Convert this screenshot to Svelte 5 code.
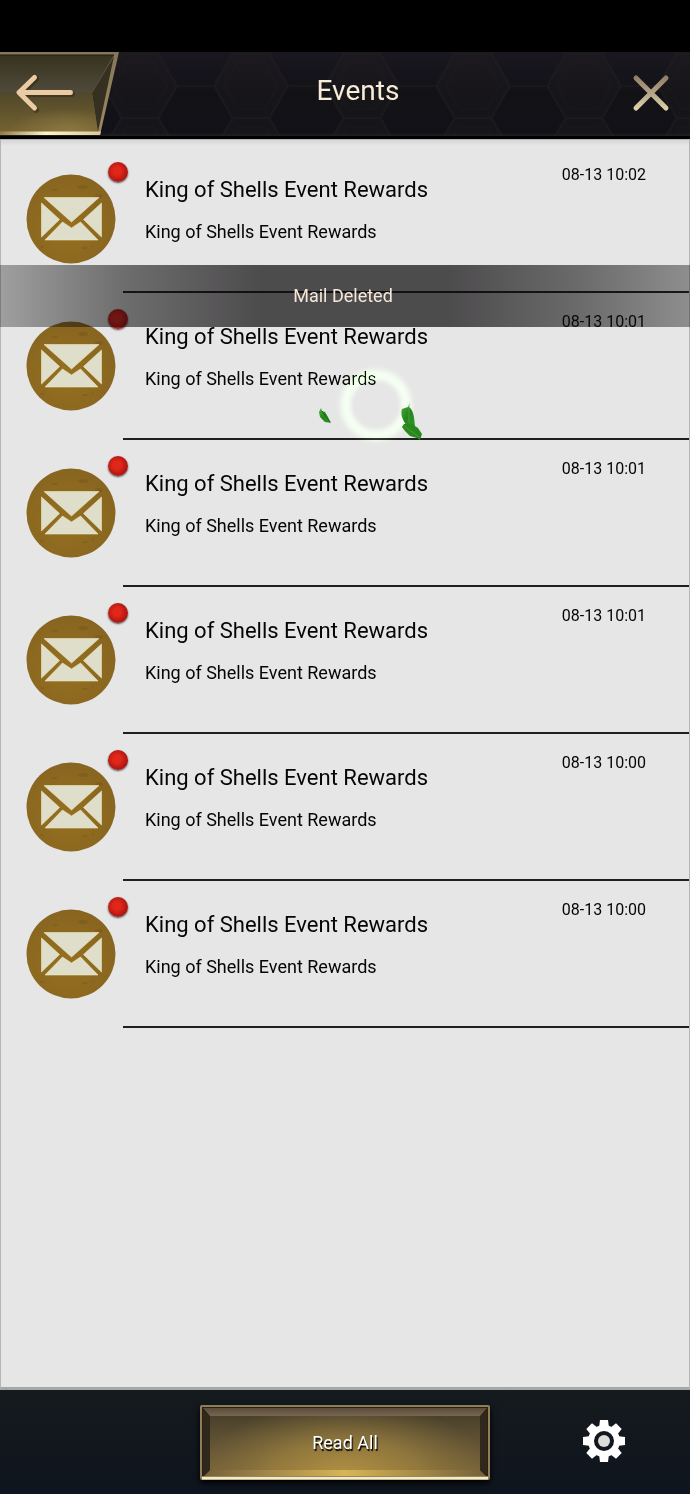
<script>
  const mails = [
    { id: 1, time: "08-13 10:02" },
    { id: 2, time: "08-13 10:01" },
    { id: 3, time: "08-13 10:01" },
    { id: 4, time: "08-13 10:01" },
    { id: 5, time: "08-13 10:00" },
    { id: 6, time: "08-13 10:00" },
  ].map((mail) => ({
    ...mail,
    title: "King of Shells Event Rewards",
    text: "King of Shells Event Rewards",
  }));

  const teeth = [0, 45, 90, 135, 180, 225, 270, 315];
</script>

<div class="screen">
  <header>
    <svg class="hexes" aria-hidden="true">
      <defs>
        <pattern id="hex" x="214" y="2" width="111" height="64" patternUnits="userSpaceOnUse">
          <path d="M0 32 18.5 0H55.5L74 32 55.5 64H18.5Z" fill="#22201f" fill-opacity=".25" />
          <path d="M0 32 18.5 0H55.5L74 32 55.5 64H18.5ZM74 32H111" fill="none" stroke="#242124" stroke-opacity=".4" stroke-width="2" />
          <path d="M10 32 23 9H51L64 32 51 55H23Z" fill="none" stroke="#242126" stroke-opacity=".25" />
        </pattern>
      </defs>
      <rect width="100%" height="100%" fill="url(#hex)" />
    </svg>

    <button class="back" aria-label="Back">
      <svg viewBox="0 0 120 84" aria-hidden="true">
        <defs>
          <linearGradient id="backTop" x2="0" y2="1">
            <stop offset="0" stop-color="#37331f" />
            <stop offset="1" stop-color="#504a3b" />
          </linearGradient>
          <linearGradient id="backLow" x2="0" y2="1">
            <stop offset="0" stop-color="#51482a" />
            <stop offset="1" stop-color="#736231" />
          </linearGradient>
          <radialGradient id="backGlow" cx=".68" cy="1" r=".6">
            <stop offset="0" stop-color="#8d7843" />
            <stop offset="1" stop-color="#8d7843" stop-opacity="0" />
          </radialGradient>
          <linearGradient id="backEdge" x2="0" y2="1">
            <stop offset="0" stop-color="#85765a" />
            <stop offset="1" stop-color="#9c8b5f" />
          </linearGradient>
          <linearGradient id="backBase">
            <stop offset="0" stop-color="#8f7b45" />
            <stop offset=".45" stop-color="#fff3c5" />
            <stop offset="1" stop-color="#d8c999" />
          </linearGradient>
        </defs>
        <path d="M0 0H119L100 83H0Z" fill="url(#backEdge)" />
        <path d="M0 3H114L92 41H0Z" fill="url(#backTop)" />
        <path d="M0 41H92L98 80H0Z" fill="url(#backLow)" />
        <path d="M0 41H92L98 80H0Z" fill="url(#backGlow)" />
        <path d="M114 4 92 41 98 80Z" fill="#353020" />
        <path d="M0 79.500H101L100 83H0Z" fill="url(#backBase)" />
        <path d="M0 3H114" stroke="#211e13" />
        <path d="M36 27 21 42 36 58M21 42H72" fill="none" stroke="#241e10" stroke-opacity=".4" stroke-width="6" stroke-linecap="round" />
        <path d="M34.500 25.500 19 40.500 34.500 56M19 40.500 70.500 40.400" fill="none" stroke="#eacba3" stroke-width="5" stroke-linecap="round" stroke-linejoin="round" />
      </svg>
    </button>

    <h1>Events</h1>

    <button class="close" aria-label="Close">
      <svg viewBox="0 0 40 40" aria-hidden="true">
        <defs>
          <linearGradient id="cross" x2="0" y2="40" gradientUnits="userSpaceOnUse">
            <stop offset="0" stop-color="#85765f" />
            <stop offset=".55" stop-color="#b8a98c" />
            <stop offset="1" stop-color="#e5dcb2" />
          </linearGradient>
        </defs>
        <path d="M5 5 35 35M35 5 5 35" fill="none" stroke="url(#cross)" stroke-width="5" stroke-linecap="round" />
      </svg>
    </button>
  </header>

  <main>
    <ul>
      {#each mails as mail (mail.id)}
        <li>
          <button class="mail">
            <span class="avatar">
              <svg viewBox="0 0 90 90" aria-hidden="true">
                <defs>
                  <radialGradient id="coin{mail.id}" cx=".45" cy=".6" r=".6">
                    <stop offset="0" stop-color="#957021" />
                    <stop offset="1" stop-color="#886520" />
                  </radialGradient>
                </defs>
                <circle cx="45" cy="45" r="44.500" fill="url(#coin{mail.id})" />
                <g fill="#70501a" opacity=".35">
                  <ellipse cx="57" cy="13" rx="5" ry="2" />
                  <ellipse cx="73" cy="22" rx="4" ry="2" />
                  <ellipse cx="29" cy="16" rx="3" ry="1" />
                  <ellipse cx="16" cy="73" rx="2" ry="1" />
                  <ellipse cx="59" cy="74" rx="3" ry="1" />
                  <circle cx="67" cy="72" r="1" />
                </g>
                <g fill="#dedecb" stroke="#efe9ba" stroke-width=".6">
                  <path d="M18 23.500H73L45.500 48Z" />
                  <path d="M15.500 29 33.500 45.500 15.500 63Z" />
                  <path d="M75.500 29 57.500 45.500 75.500 63Z" />
                  <path d="M36.500 48 45.500 54 54.500 48 72 66H19Z" />
                </g>
              </svg>
              <span class="dot"></span>
            </span>
            <span class="body">
              <span class="copy">
                <span class="title">{mail.title}</span>
                <span class="text">{mail.text}</span>
              </span>
              <time>{mail.time}</time>
            </span>
          </button>
        </li>
      {/each}
    </ul>

    <div class="toast" role="status">Mail Deleted</div>

    <div class="ring"></div>
    <svg class="leaves" viewBox="310 360 130 90" aria-hidden="true">
      <defs>
        <linearGradient id="leaf" x2="1" y2="1">
          <stop offset="0" stop-color="#48ad39" />
          <stop offset=".5" stop-color="#25841e" />
          <stop offset="1" stop-color="#2f9a25" />
        </linearGradient>
      </defs>
      <path d="M321 408 322 411 325 412 328 417 331 423 325 422 320 417 319 412Z" fill="url(#leaf)" />
      <path d="M322 411 330 422" fill="none" stroke="#1a6819" stroke-width="1" />
      <path d="M410 403 409 407C414 411 414 417 415 426L408 427C403 421 400 415 402 409L408 407Z" fill="url(#leaf)" />
      <path d="M402 427 404 424 412 424 418 428 422 434 420 440 417 438 410 436 405 431Z" fill="#28881f" />
      <path d="M409 407 409 423M404 426 419 437" fill="none" stroke="#57ad45" stroke-opacity=".6" stroke-width="1" />
    </svg>
  </main>

  <footer>
    <button class="read">
      <svg viewBox="0 0 290 75" preserveAspectRatio="none" aria-hidden="true">
        <defs>
          <linearGradient id="plate" x2="0" y2="1">
            <stop offset="0" stop-color="#4a412b" />
            <stop offset=".5" stop-color="#625334" />
            <stop offset="1" stop-color="#776338" />
          </linearGradient>
          <radialGradient
            id="shine"
            cx="145"
            cy="0"
            r="150"
            gradientUnits="userSpaceOnUse"
            gradientTransform="translate(0 72) scale(1 .5)"
          >
            <stop offset="0" stop-color="#b39343" />
            <stop offset=".5" stop-color="#9c803f" stop-opacity=".75" />
            <stop offset="1" stop-color="#84703c" stop-opacity="0" />
          </radialGradient>
          <linearGradient id="lip">
            <stop offset="0" stop-color="#75613a" />
            <stop offset=".5" stop-color="#d9b556" />
            <stop offset="1" stop-color="#75613a" />
          </linearGradient>
          <linearGradient id="ridge" x2="0" y2="1">
            <stop offset="0" stop-color="#5b4b38" />
            <stop offset="1" stop-color="#756553" />
          </linearGradient>
        </defs>
        <rect width="290" height="75" rx="2" fill="#917c5b" />
        <rect x="2" y="2" width="286" height="70" fill="#292114" />
        <rect x="10" y="11" width="270" height="55" fill="url(#plate)" />
        <rect x="10" y="11" width="270" height="55" fill="url(#shine)" />
        <path d="M3 3H287L280 11H10Z" fill="url(#ridge)" />
        <path d="M10 65H280L286 71H4Z" fill="url(#lip)" />
        <path d="M3 5 10 12V65L3 71ZM287 5 280 12V65L287 71Z" fill="#30291b" />
        <path d="M2 73H288" stroke="#f8edc2" stroke-width="3" />
      </svg>
      <span>Read All</span>
    </button>
    <button class="settings" aria-label="Settings">
      <svg viewBox="-21 -21 42 42" aria-hidden="true">
        <g fill="#fff">
          {#each teeth as angle}
            <path d="M-5-13-4-21H4L5-13Z" transform="rotate({angle})" />
          {/each}
        </g>
        <circle r="13" fill="none" stroke="#fff" stroke-width="6" />
        <circle r="6" fill="#dcdcdc" />
      </svg>
    </button>
  </footer>
</div>

<style>
  :global(body) {
    margin: 0;
    background: #000;
  }
  .screen {
    box-sizing: border-box;
    min-height: 100vh;
    padding-top: 52px;
    display: flex;
    flex-direction: column;
    background: #000;
    color: #050505;
    font-family: Roboto, "Liberation Sans", sans-serif;
  }
  button {
    margin: 0;
    padding: 0;
    border: 0;
    background: none;
    color: inherit;
    font: inherit;
    cursor: pointer;
  }
  svg {
    display: block;
  }
  header {
    position: relative;
    display: grid;
    grid-template-columns: 120px 1fr 94px;
    height: 84px;
    border-bottom: 3px solid #000;
    background: linear-gradient(#1a1720, #121216 50%, #121118 96%, #201e20);
  }
  .hexes {
    position: absolute;
    inset: 0;
    width: 100%;
    height: 100%;
  }
  .back,
  .close,
  h1 {
    position: relative;
  }
  .back svg {
    width: 120px;
    height: 84px;
  }
  h1 {
    margin: 0;
    color: #f8ebd8;
    font-size: 28px;
    font-weight: 400;
    line-height: 78px;
    text-align: center;
  }
  .close {
    justify-self: end;
    padding: 0 19px 2px;
  }
  .close svg {
    width: 40px;
    height: 40px;
  }
  main {
    position: relative;
    flex: 1;
    box-sizing: border-box;
    padding-top: 6px;
    border: 1px solid #b5b5b5;
    border-bottom: 3px solid #a5a7a7;
    background: linear-gradient(#d6d6d6, #e6e6e6 6px);
  }
  ul {
    margin: 0;
    padding: 0;
    list-style: none;
  }
  .mail {
    display: flex;
    width: 100%;
    height: 147px;
    text-align: left;
  }
  .avatar {
    position: relative;
    flex: none;
    width: 122px;
    padding-top: 28px;
  }
  .avatar svg {
    width: 90px;
    height: 90px;
    margin-left: 25px;
  }
  .dot {
    position: absolute;
    top: 16px;
    right: -5px;
    width: 20px;
    height: 20px;
    border-radius: 50%;
    background: radial-gradient(circle at 45% 45%, #e0271a 25%, #a31310 75%);
    box-shadow: 0 1px 2px rgba(0, 0, 0, 0.7);
  }
  .body {
    box-sizing: border-box;
    display: flex;
    flex: 1;
    align-self: stretch;
    align-items: flex-start;
    justify-content: space-between;
    padding: 19px 43px 0 22px;
    border-bottom: 2px solid #202020;
  }
  .copy {
    display: grid;
    gap: 16px;
    padding-top: 12px;
  }
  .title {
    font-size: 22px;
    line-height: 26px;
  }
  .text {
    font-size: 18px;
    line-height: 26px;
  }
  time {
    font-size: 16px;
    line-height: 20px;
  }
  .toast {
    position: absolute;
    top: 125px;
    left: -1px;
    right: -1px;
    height: 62px;
    padding-right: 4px;
    box-sizing: border-box;
    background: linear-gradient(
      90deg,
      rgba(12, 10, 12, 0.32),
      rgba(12, 10, 12, 0.55) 18%,
      rgba(12, 10, 12, 0.7) 38%,
      rgba(12, 10, 12, 0.7) 65%,
      rgba(12, 10, 12, 0.56) 84%,
      rgba(12, 10, 12, 0.4)
    );
    color: #f7e7d6;
    font-size: 18px;
    line-height: 62px;
    text-align: center;
  }
  .ring {
    position: absolute;
    top: 230px;
    left: calc(50% - 4px);
    box-sizing: border-box;
    width: 70px;
    height: 70px;
    border: 10px solid #d0ffbe;
    border-radius: 50%;
    filter: blur(2px);
    mix-blend-mode: overlay;
    box-shadow: 0 0 5px #b4ffa0;
    pointer-events: none;
  }
  .leaves {
    position: absolute;
    top: 220px;
    left: calc(50% - 35px);
    width: 130px;
    height: 90px;
    pointer-events: none;
  }
  footer {
    display: grid;
    grid-template-columns: 1fr 290px 1fr;
    align-items: center;
    padding: 15px 0 14px;
    background: linear-gradient(#151a1e, #0f151e);
  }
  .read {
    position: relative;
    grid-column: 2;
    height: 75px;
    box-shadow: 0 3px 6px #000;
    color: #fff;
    font-size: 18px;
    text-shadow: 1px 2px 1px #000;
  }
  .read svg {
    position: absolute;
    inset: 0;
    width: 100%;
    height: 100%;
  }
  .read span {
    position: relative;
  }
  .settings {
    justify-self: end;
    margin-right: 65px;
    padding-bottom: 4px;
  }
  .settings svg {
    width: 42px;
    height: 42px;
  }
</style>
